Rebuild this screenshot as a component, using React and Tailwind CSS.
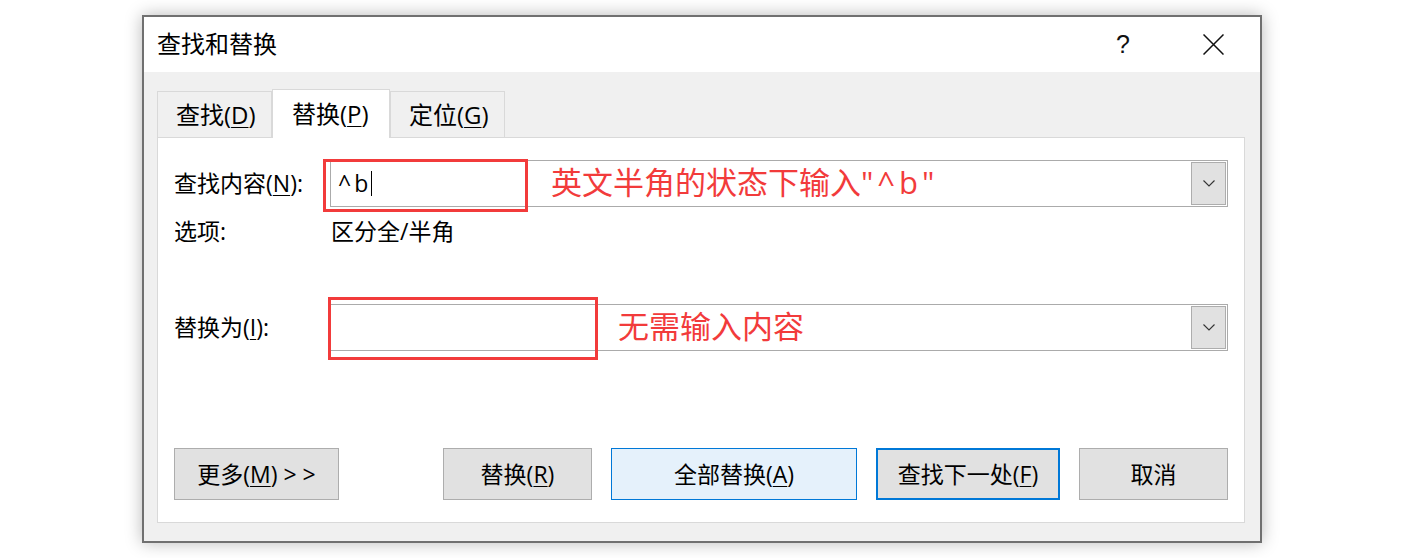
import React from 'react';

const FONT = { fontFamily: '"Open Sans", "Noto Sans CJK SC", sans-serif' };

function Mn({ children }) {
  return <u className="underline underline-offset-[3px] decoration-1">{children}</u>;
}

function Chevron() {
  return (
    <svg width="12" height="7" viewBox="0 0 12 7" fill="none">
      <path d="M0.5 0.5 L6 6 L11.5 0.5" stroke="#333" strokeWidth="1.1" />
    </svg>
  );
}

function ComboBox({ children }) {
  return (
    <div className="relative flex-1 h-[47px] border border-[#ababab] bg-white flex items-center">
      <div className="flex-1 h-full flex items-center pl-[7px]">{children}</div>
      <div className="w-[35px] h-[43px] mr-px bg-[#e1e1e1] border border-[#adadad] flex items-center justify-center">
        <Chevron />
      </div>
    </div>
  );
}

function Tab({ active, children }) {
  if (active) {
    return (
      <div className="w-[118px] h-[49px] bg-white border border-[#d9d9d9] border-b-0 flex items-center pl-[19px] text-[24px] leading-none text-black relative z-10 -mb-px">
        {children}
      </div>
    );
  }
  return (
    <div className="w-[115px] h-[46px] bg-[#f0f0f0] border border-[#d9d9d9] border-b-0 flex items-center pl-[18px] text-[24px] leading-none text-black">
      {children}
    </div>
  );
}

function Btn({ w, variant, children }) {
  const cls =
    variant === 'hover'
      ? 'bg-[#e5f1fb] border border-[#0078d7]'
      : variant === 'default'
      ? 'bg-[#e1e1e1] border-2 border-[#0078d7]'
      : 'bg-[#e1e1e1] border border-[#adadad]';
  return (
    <div className={`${w} h-[52px] ${cls} flex items-center justify-center text-[23px] leading-none text-black`}>
      {children}
    </div>
  );
}

export default function App() {
  return (
    <div className="w-[1406px] h-[558px] bg-white flex items-center pl-[142px]" style={FONT}>
      <div className="w-[1120px] h-[528px] border-2 border-[#707070] bg-[#f0f0f0] shadow-[0_0_16px_rgba(0,0,0,0.28)] flex flex-col">
        {/* title bar */}
        <div className="h-[55px] bg-white flex items-center pl-[13px]">
          <span className="text-[24px] leading-none text-black -mt-[2px]">查找和替换</span>
          <div className="ml-auto flex items-center pr-[2px]">
            <div className="w-[90px] flex justify-center text-[25px] leading-none text-[#111]" style={{ fontFamily: '"Liberation Sans", sans-serif' }}>
              ?
            </div>
            <div className="w-[90px] flex justify-center">
              <svg width="21" height="21" viewBox="0 0 21 21">
                <path d="M0.5 0.5 L20.5 20.5 M20.5 0.5 L0.5 20.5" stroke="#111" strokeWidth="1.5" />
              </svg>
            </div>
          </div>
        </div>

        {/* body */}
        <div className="flex-1 flex flex-col pt-[17px] pl-[13px] pr-[15px] pb-[18px]">
          <div className="flex items-end h-[48px]">
            <Tab>查找(<Mn>D</Mn>)</Tab>
            <Tab active>替换(<Mn>P</Mn>)</Tab>
            <Tab>定位(<Mn>G</Mn>)</Tab>
          </div>

          <div className="flex-1 bg-white border border-[#d9d9d9] flex flex-col pt-[22px] px-[16px] text-[23px] text-black">
            {/* find row */}
            <div className="flex items-center h-[47px]">
              <div className="w-[156px] leading-none">
                查找内容(<Mn>N</Mn>):
              </div>
              <ComboBox>
                <span className="leading-none tracking-[3px]">^b</span>
                <span className="w-px h-[25px] bg-black" />
                <div className="absolute left-[-8px] top-[-2px] w-[205px] h-[53px] border-[3px] border-[#f23b3b]" />
                <span className="absolute left-[220px] top-1/2 -translate-y-[55%] text-[31px] leading-none text-[#f23b3b] whitespace-nowrap">
                  英文半角的状态下输入<span className="tracking-[4px]">"^b"</span>
                </span>
              </ComboBox>
            </div>

            {/* options */}
            <div className="flex items-center h-[30px] mt-[9px] leading-none">
              <div className="w-[157px]">选项:</div>
              <div>区分全/半角</div>
            </div>

            {/* replace row */}
            <div className="flex items-center h-[47px] mt-[58px]">
              <div className="w-[156px] leading-none">
                替换为(<Mn>I</Mn>):
              </div>
              <ComboBox>
                <div className="absolute left-[-3px] top-[-8px] w-[270px] h-[63px] border-[3px] border-[#f23b3b]" />
                <span className="absolute left-[287px] top-1/2 -translate-y-[55%] text-[31px] leading-none text-[#f23b3b] whitespace-nowrap">
                  无需输入内容
                </span>
              </ComboBox>
            </div>

            {/* buttons */}
            <div className="flex items-center mt-[97px]">
              <Btn w="w-[165px]">
                更多(<Mn>M</Mn>) &gt; &gt;
              </Btn>
              <div className="ml-auto flex items-center gap-[19px]">
                <Btn w="w-[149px]">
                  替换(<Mn>R</Mn>)
                </Btn>
                <Btn w="w-[246px]" variant="hover">
                  全部替换(<Mn>A</Mn>)
                </Btn>
                <Btn w="w-[184px]" variant="default">
                  查找下一处(<Mn>F</Mn>)
                </Btn>
                <Btn w="w-[149px]">取消</Btn>
              </div>
            </div>
          </div>
        </div>
      </div>
    </div>
  );
}
